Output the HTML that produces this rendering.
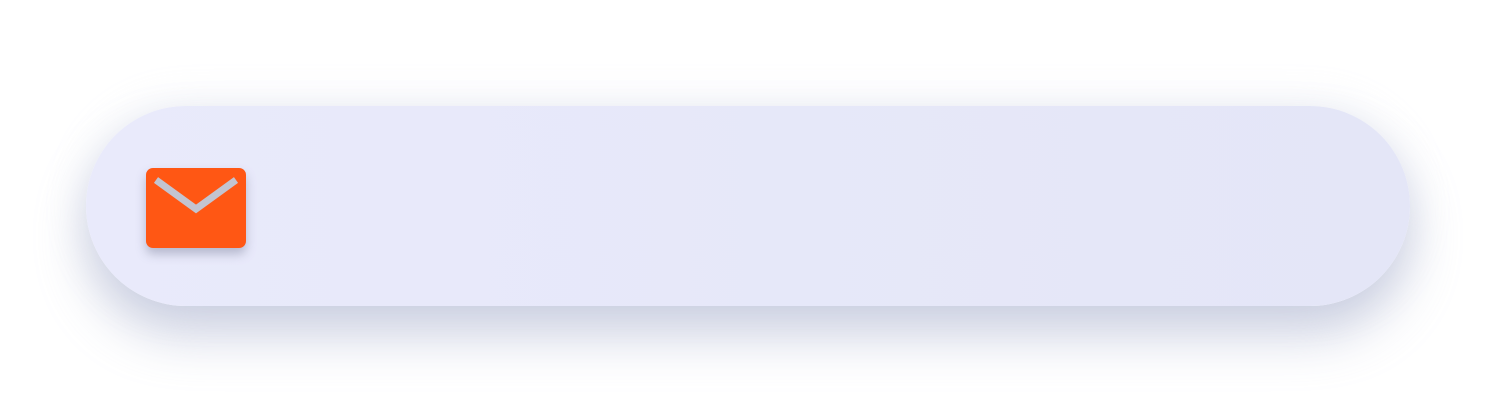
<!DOCTYPE html>
<html><head><style>
html,body{margin:0;padding:0;background:#fff;width:1498px;height:416px;overflow:hidden}
.pill{position:absolute;left:86px;top:106px;width:1324px;height:200px;border-radius:100px;
background:linear-gradient(90deg,#e9eafb,#e4e6f7);
box-shadow:0 30px 50px rgba(150,160,195,0.45),0 0 40px rgba(200,205,225,0.3)}
.ic{position:absolute;left:146px;top:168px;width:100px;height:80px;background:#ff5714;border-radius:7px;
box-shadow:0 6px 10px rgba(120,125,150,0.45)}
</style></head><body>
<div class="pill"></div>
<div class="ic"><svg width="100" height="80"><polyline points="10,12 50,41 90,12" fill="none" stroke="#c3c4d0" stroke-width="7"/></svg></div>
</body></html>
